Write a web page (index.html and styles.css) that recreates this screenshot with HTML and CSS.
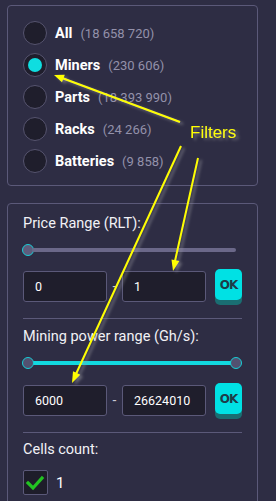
FILE: index.html
```html
<!DOCTYPE HTML><html>
<head>
  <meta name="viewport" content="width=device-width, initial-scale=1">
  <link rel="stylesheet" href="styles.css">
</head>
<body>

  <!-- item type -->
  <div class="panel types">
    <label class="radio-row"><span class="radio"></span><span class="name">All</span><span class="count">(18 658 720)</span></label>
    <label class="radio-row"><span class="radio on"></span><span class="name">Miners</span><span class="count">(230 606)</span></label>
    <label class="radio-row"><span class="radio"></span><span class="name">Parts</span><span class="count">(18 393 990)</span></label>
    <label class="radio-row"><span class="radio"></span><span class="name">Racks</span><span class="count">(24 266)</span></label>
    <label class="radio-row"><span class="radio"></span><span class="name">Batteries</span><span class="count">(9 858)</span></label>
  </div>

  <!-- ranges -->
  <div class="panel filters">
    <div class="label">Price Range (RLT):</div>
    <div class="slider price"><span class="thumb"></span><span class="bar"></span></div>
    <div class="range-row">
      <input class="field" type="text" value="0" readonly>
      <span class="dash">-</span>
      <input class="field" type="text" value="1" readonly>
      <button class="ok">OK</button>
    </div>

    <hr class="sep">

    <div class="label">Mining power range (Gh/s):</div>
    <div class="slider power"><span class="thumb"></span><span class="bar"></span><span class="thumb"></span></div>
    <div class="range-row">
      <input class="field" type="text" value="6000" readonly>
      <span class="dash">-</span>
      <input class="field" type="text" value="26624010" readonly>
      <button class="ok">OK</button>
    </div>

    <hr class="sep">

    <div class="label cells">Cells count:</div>
    <label class="check-row">
      <span class="check"><svg width="23" height="23" viewBox="0 0 23 23"><polyline points="4,12 9,17 18,7" fill="none" stroke="#22c322" stroke-width="3.2" stroke-linecap="square"/></svg></span>
      <span>1</span>
    </label>
  </div>

  <!-- annotation drawn over the screenshot -->
  <svg class="notes" width="276" height="501" viewBox="0 0 276 501">
    <defs>
      <filter id="shade" x="-20%" y="-20%" width="140%" height="140%">
        <feDropShadow dx="3" dy="2" stdDeviation="1.8" flood-color="#9a9aa0" flood-opacity="0.55"/>
      </filter>
    </defs>
    <g filter="url(#shade)" stroke="#ffff00" stroke-width="2" fill="#ffff00">
      <line x1="180" y1="122" x2="62" y2="78"/>
      <polygon points="54,75 62,82.2 64.8,74.8" stroke="none"/>
      <line x1="181" y1="146" x2="76" y2="374"/>
      <polygon points="72,383 80.2,374.7 73,371.3" stroke="none"/>
      <line x1="198" y1="158" x2="175" y2="261"/>
      <polygon points="173,271 179.3,261.1 171.5,259.4" stroke="none"/>
      <text x="190" y="138" stroke="none" class="note-text">Filters</text>
    </g>
  </svg>

</body>
</html>
```

FILE: styles.css
```css
html {font-family: Roboto, "Liberation Sans", sans-serif;}
body {margin: 0; background: #2e2d44; color: #fff; position: relative; height: 501px; overflow: hidden;}

.panel {margin: 5px 18px 0 7px; border: 1px solid #5b5979; border-radius: 4px;}

/* radio list */
.types {padding: 11px 15px 8px;}
.radio-row {display: flex; align-items: center; height: 32px;}
.radio {width: 24px; height: 24px; box-sizing: border-box; border: 1.5px solid #56546f; border-radius: 50%; background: #1f1e2c; margin-right: 8px; display: flex; align-items: center; justify-content: center; flex: none;}
.radio.on::after {content: ""; width: 14px; height: 14px; border-radius: 50%; background: #0fdde0;}
.name {font-weight: bold; font-size: 14.5px; margin-right: 8px;}
.count {font-size: 13px; color: #9391aa;}

/* ranges */
.filters {margin-top: 17px; padding: 12px 15px 10px;}
.label {font-size: 14.5px; line-height: 16px; color: #f2f2f6;}
.sep {border: 0; height: 1px; background: #5b5979; margin: 16px 0 0;}
.sep + .label {margin-top: 10px;}
.label.cells {margin-top: 9px;}

.slider {display: flex; align-items: center; height: 12px; margin: 12px 0 0 -1px;}
.slider.price {margin-right: 6px;}
.thumb {width: 12px; height: 12px; box-sizing: border-box; border: 1.5px solid #17cfd6; border-radius: 50%; background: #5e5c7c; flex: none;}
.bar {flex: 1; height: 4px; border-radius: 2px; background: #6b6889;}
.price .bar {margin-left: -2px;}
.power .bar {background: #12d9e0; height: 4px; margin: 0 -1px; border-radius: 0;}
.power .thumb {background: #525170; position: relative; z-index: 1;}

.range-row {display: flex; align-items: flex-start; margin-top: 15px;}
.power + .range-row {margin-top: 16px;}
.field {width: 84px; height: 31px; box-sizing: border-box; border: 1px solid #5b5979; border-radius: 3px; background: #1f1e2c; color: #fff; font-family: Roboto, sans-serif; font-size: 12.5px; padding: 0 0 0 11px; outline: none;}
.dash {width: 15px; text-align: center; line-height: 31px; font-size: 14px; color: #c8c8d4;}
.ok {margin: -2px 0 0 9px; width: 27px; height: 31px; padding: 0; border: 0; border-radius: 5px; background: #00e1e4; box-shadow: 0 5px 0 #1a6e72; color: #1d3c48; font-family: "DejaVu Sans", sans-serif; font-weight: bold; font-size: 12px; letter-spacing: -1px;}

.check-row {display: flex; align-items: center; margin-top: 12px; font-size: 15px;}
.check {width: 25px; height: 25px; box-sizing: border-box; border: 1px solid #5b5979; border-radius: 2px; background: #1e1d2a; margin-right: 8px; display: flex; align-items: center; justify-content: center;}
.check svg {display: block;}

/* annotation */
.notes {position: absolute; left: 0; top: 0; pointer-events: none;}
.note-text {font-family: "Liberation Sans", Arial, sans-serif; font-size: 17px;}
```
